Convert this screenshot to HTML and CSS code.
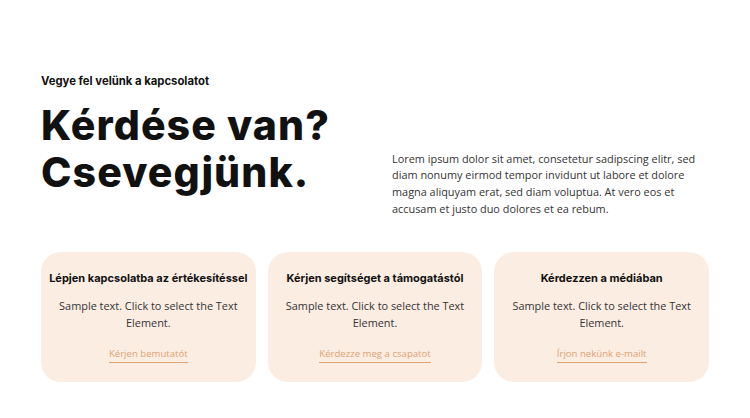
FILE: index.html
```html
<!DOCTYPE html>
<html lang="hu">
<head>
<meta charset="utf-8">
<link rel="stylesheet" href="styles.css">
</head>
<body>
<section class="page">
  <div class="top">
    <div class="intro">
      <div class="eyebrow">Vegye fel velünk a kapcsolatot</div>
      <h1 class="title">Kérdése van?<br>Csevegjünk.</h1>
    </div>
    <p class="lead">Lorem ipsum dolor sit amet, consetetur sadipscing elitr, sed diam nonumy eirmod tempor invidunt ut labore et dolore magna aliquyam erat, sed diam voluptua. At vero eos et accusam et justo duo dolores et ea rebum.</p>
  </div>
  <div class="cards">
    <div class="card">
      <h3 class="card-title">Lépjen kapcsolatba az értékesítéssel</h3>
      <p class="card-text">Sample text. Click to select the Text Element.</p>
      <a class="card-link" href="#">Kérjen bemutatót</a>
    </div>
    <div class="card">
      <h3 class="card-title">Kérjen segítséget a támogatástól</h3>
      <p class="card-text">Sample text. Click to select the Text Element.</p>
      <a class="card-link" href="#">Kérdezze meg a csapatot</a>
    </div>
    <div class="card">
      <h3 class="card-title">Kérdezzen a médiában</h3>
      <p class="card-text">Sample text. Click to select the Text Element.</p>
      <a class="card-link" href="#">Írjon nekünk e-mailt</a>
    </div>
  </div>
</section>
</body>
</html>
```
FILE: styles.css
```css
* { box-sizing: border-box; }
body {
  margin: 0;
  background: #fff;
  font-family: "Open Sans", "Liberation Sans", sans-serif;
  color: #111;
}
.page {
  width: 750px;
  padding: 73px 41px 0 41px;
}
.top {
  display: flex;
  align-items: flex-start;
  justify-content: space-between;
}
.eyebrow {
  font-family: "Inter", "Liberation Sans", sans-serif;
  font-weight: 700;
  font-size: 11.3px;
  line-height: 16px;
  color: #111;
}
.title {
  margin: 12.6px 0 0 0;
  font-family: "Inter", "Liberation Sans", sans-serif;
  font-weight: 800;
  font-size: 41px;
  line-height: 47px;
  letter-spacing: 1.1px;
  color: #111;
}
.lead {
  width: 317px;
  margin: 77.6px 0 0 0;
  font-size: 10.9px;
  line-height: 16.7px;
  color: #333;
}
.cards {
  margin-top: 35px;
  display: grid;
  grid-template-columns: repeat(3, 1fr);
  gap: 12px;
}
.card {
  background: #fcede3;
  border-radius: 20px;
  height: 130px;
  padding: 18px 8px 0 8px;
  display: flex;
  flex-direction: column;
  align-items: center;
  text-align: center;
}
.card-title {
  margin: 0;
  font-family: "Inter", "Liberation Sans", sans-serif;
  font-weight: 700;
  font-size: 11px;
  line-height: 16px;
  color: #111;
}
.card-text {
  margin: 11.6px 0 0 0;
  font-size: 10.9px;
  line-height: 16.7px;
  color: #333;
}
.card-link {
  margin-top: 16px;
  padding-bottom: 1px;
  font-size: 9.6px;
  line-height: 14px;
  color: #dca270;
  text-decoration: none;
  border-bottom: 1.5px solid #dca270;
}
```
